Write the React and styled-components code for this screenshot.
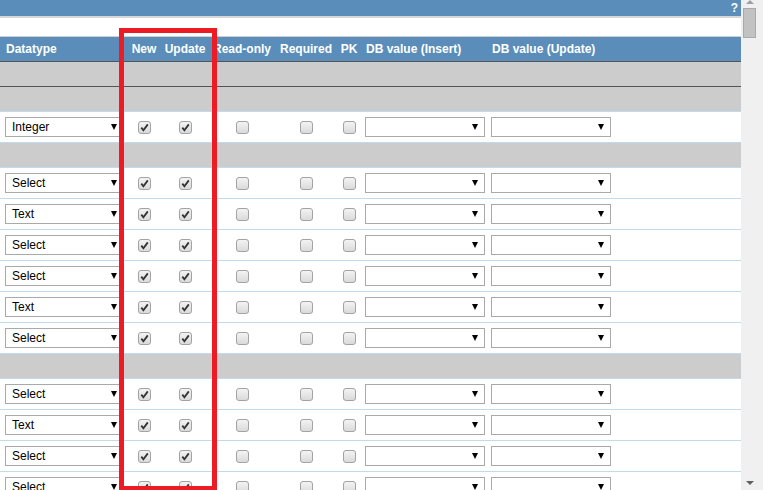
import React from 'react';
import styled, { createGlobalStyle } from 'styled-components';

const GlobalStyle = createGlobalStyle`
  html, body {
    margin: 0;
    padding: 0;
    overflow: hidden;
    background: #ffffff;
    font-family: "Liberation Sans", Arial, sans-serif;
  }
`;

// Layout
const Page = styled.div`
  display: flex;
  width: 763px;
  height: 490px;
  overflow: hidden;
`;

const Main = styled.div`
  position: relative;
  width: 741px;
  height: 490px;
  overflow: hidden;
`;

const TopBar = styled.div`
  display: flex;
  justify-content: flex-end;
  align-items: center;
  height: 16px;
  padding-right: 3px;
  background-color: #5a8db9;
  color: #ffffff;
  font-size: 12px;
  font-weight: bold;
  border-bottom: 2px solid #d6d6d6;
`;

const FilterBar = styled.div`
  height: 18px;
  background: #ffffff;
  border-bottom: 1px solid #cfcfcf;
`;

const Table = styled.table`
  width: 741px;
  table-layout: fixed;
  border-collapse: collapse;
  border-spacing: 0;
`;

const HeadCell = styled.th`
  height: 24px;
  padding: 0 0 0 ${p => p.$pad || 0}px;
  background-color: #5a8db9;
  color: #ffffff;
  font-size: 12px;
  font-weight: bold;
  text-align: ${p => (p.$center ? 'center' : 'left')};
  white-space: nowrap;
  border-bottom: 1px solid #555555;
`;

const GroupRow = styled.tr`
  td {
    height: 24px;
    padding: 0;
    background-color: #cccccc;
    border-bottom: 1px solid ${p => (p.$dark ? '#555555' : '#c3d9ee')};
  }
`;

const DataRow = styled.tr`
  td {
    height: 30px;
    padding: 0;
    background: #ffffff;
    border-bottom: 1px solid #c3d9ee;
    vertical-align: middle;
  }
`;

const Cell = styled.td`
  text-align: ${p => (p.$center ? 'center' : 'left')};
  overflow: hidden;
`;

const SelectBox = styled.div`
  position: relative;
  box-sizing: border-box;
  width: ${p => p.$w}px;
  height: 20px;
  margin-left: ${p => p.$ml}px;
  padding-left: 6px;
  border: 1px solid #a9a9a9;
  background: #ffffff;
  color: #000000;
  font-size: 12px;
  line-height: 18px;
`;

const Arrow = styled.span`
  position: absolute;
  right: 6px;
  top: 6px;
  width: 0;
  height: 0;
  border-left: 3.5px solid transparent;
  border-right: 3.5px solid transparent;
  border-top: 6px solid #000000;
`;

const Box = styled.span`
  display: inline-flex;
  align-items: center;
  justify-content: center;
  box-sizing: border-box;
  width: 13px;
  height: 13px;
  vertical-align: middle;
  border: 1px solid #a3a3a3;
  border-radius: 3px;
  background: linear-gradient(#f3f3f3, #dadada);
`;

const Scrollbar = styled.div`
  position: relative;
  width: 22px;
  height: 490px;
  background: #f0f0f0;
`;

const Thumb = styled.div`
  position: absolute;
  left: 2px;
  top: 8px;
  width: 13px;
  height: 30px;
  box-sizing: border-box;
  background: #c2c2c2;
  border: 1px solid #a9a9a9;
`;

const ScrollArrow = styled.span`
  position: absolute;
  left: 5px;
  width: 0;
  height: 0;
  border-left: 4px solid transparent;
  border-right: 4px solid transparent;
  ${p =>
    p.$up
      ? 'top: 0px; border-bottom: 4px solid #a0a0a0;'
      : 'top: 481px; border-top: 4px solid #606060;'}
`;

const Highlight = styled.div`
  position: absolute;
  left: 119px;
  top: 28px;
  width: 98px;
  height: 463px;
  box-sizing: border-box;
  border: 5px solid #ed1c24;
  pointer-events: none;
`;

const Check = ({ checked }) => (
  <Box>
    {checked && (
      <svg width="9" height="9" viewBox="0 0 9 9">
        <path d="M1.3 4.6 L3.4 7.2 L7.8 1.4" fill="none" stroke="#333" strokeWidth="1.8" />
      </svg>
    )}
  </Box>
);

const Select = ({ value, w, ml }) => (
  <SelectBox $w={w} $ml={ml}>
    {value}
    <Arrow />
  </SelectBox>
);

const columns = [124, 40, 42, 72, 56, 30, 124, 253];

const rows = [
  { group: true, dark: true },
  { group: true },
  { type: 'Integer' },
  { group: true },
  { type: 'Select' },
  { type: 'Text' },
  { type: 'Select' },
  { type: 'Select' },
  { type: 'Text' },
  { type: 'Select' },
  { group: true },
  { type: 'Select' },
  { type: 'Text' },
  { type: 'Select' },
  { type: 'Select' },
];

const App = () => (
  <>
    <GlobalStyle />
    <Page>
      <Main>
        <TopBar>?</TopBar>
        <FilterBar />
        <Table>
          <colgroup>
            {columns.map((w, i) => (
              <col key={i} style={{ width: w }} />
            ))}
          </colgroup>
          <thead>
            <tr>
              <HeadCell $pad={6}>Datatype</HeadCell>
              <HeadCell $center>New</HeadCell>
              <HeadCell $center>Update</HeadCell>
              <HeadCell $center>Read-only</HeadCell>
              <HeadCell $center>Required</HeadCell>
              <HeadCell $center>PK</HeadCell>
              <HeadCell $pad={2}>DB value (Insert)</HeadCell>
              <HeadCell $pad={4}>DB value (Update)</HeadCell>
            </tr>
          </thead>
          <tbody>
            {rows.map((row, i) =>
              row.group ? (
                <GroupRow key={i} $dark={row.dark}>
                  <td colSpan={8} />
                </GroupRow>
              ) : (
                <DataRow key={i}>
                  <Cell>
                    <Select value={row.type} w={119} ml={5} />
                  </Cell>
                  <Cell $center><Check checked /></Cell>
                  <Cell $center><Check checked /></Cell>
                  <Cell $center><Check /></Cell>
                  <Cell $center><Check /></Cell>
                  <Cell $center><Check /></Cell>
                  <Cell>
                    <Select w={120} ml={1} />
                  </Cell>
                  <Cell>
                    <Select w={120} ml={3} />
                  </Cell>
                </DataRow>
              )
            )}
          </tbody>
        </Table>
        <Highlight />
      </Main>
      <Scrollbar>
        <ScrollArrow $up />
        <Thumb />
        <ScrollArrow />
      </Scrollbar>
    </Page>
  </>
);

export default App;
